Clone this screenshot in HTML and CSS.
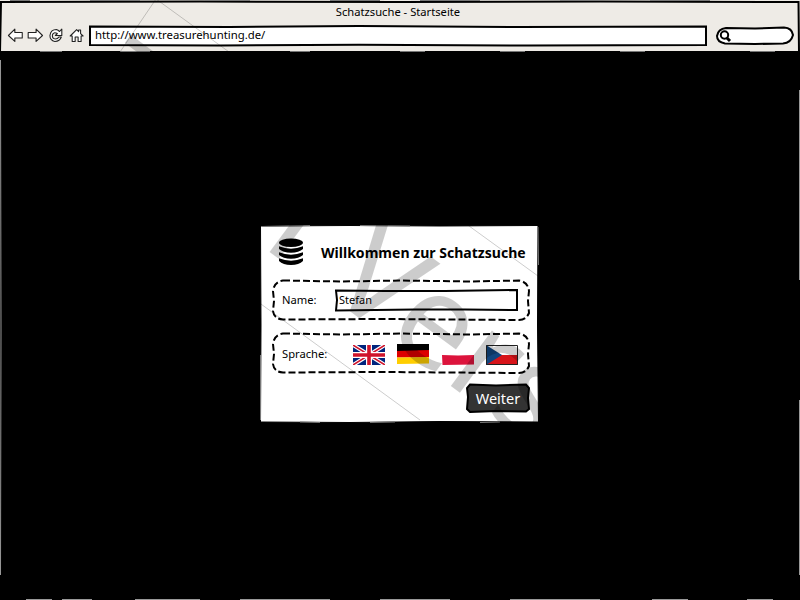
FILE: index.html
```
<!DOCTYPE html>
<html lang="de">
<head>
<meta charset="utf-8">
<title>Schatzsuche - Startseite</title>
<link rel="stylesheet" href="styles.css">
</head>
<body>
<div class="browser">
  <svg class="frame" viewBox="0 0 800 600">
    <path class="edge" d="M0 52L1 2L200 1.500L400 2L600 1.500L798.500 2L799 52"/>
    <path class="gray" d="M10 .5H30M90 .5H140M205 .5H250M330 .5H380M420 .5H480M560 .5H600M650 .5H710"/>
    <path class="gray" d="M40 51.500H62M120 51.500H150M290 51.500H310M400 51.500H425M500 51.500H525M620 51.500H645M750 51.500H775"/>
    <path class="light" d="M.5 60L1 330L.5 575M799.500 90V280M799.500 400V575M26 599.500H52M62 599.500H92M135 599.500H200M240 599.500H330M380 599.500H450M510 599.500H600M652 599.500H688M747 599.500H773"/>
  </svg>
  <header class="chrome">
    <div class="title">Schatzsuche - Startseite</div>
    <div class="toolbar">
      <svg class="nav" viewBox="0 0 90 24">
        <g class="icon">
          <path d="M8.500 11.500L15 5V8.500H22.500V14H15V17.500Z"/>
          <path d="M43 11.500L36.500 5V8.500H28.500V14H36.500V17.500Z"/>
          <path d="M60 7.500L62.500 5V11.500H56L58 9.500Q54 7.500 53 11Q52.500 14.500 56 15Q58.500 15 59.500 13H62Q60.500 17.500 55.500 17.500Q50.500 16.500 50.500 11.500Q51.500 5.500 57 5.500Q59 6 60 7.500Z"/>
          <path d="M71 12L77.500 5.500L79.500 7.500V6H81.500V9.500L84 12H82V17.500H79V13H76V17.500H73V12Z"/>
        </g>
      </svg>
      <div class="url"><svg class="sketch" viewBox="0 0 618 22"><path d="M1 1.500L140 2L270 1L430 2L617 1.500L617 20L440 20.500L270 19.800L130 20.500L1 20Z"/></svg><span>http://www.treasurehunting.de/</span></div>
      <svg class="search" viewBox="0 0 80 20"><path class="pill" d="M11 2L40 2.500L69 1.500Q77 2 78 9Q76 17 68 17.500L40 18L10 17.500Q2 16 2 10Q3 3 11 2Z"/><circle cx="9.500" cy="9" r="3.700"/><path class="handle" d="M12 12L15 15"/></svg>
    </div>
  </header>
  <main class="page">
    <section class="dialog">
      <svg class="dialog-edge" viewBox="0 0 280 200"><path d="M.5 1L90 .5L180 1L278 .5L277.500 100L278.500 197L180 196.500L90 197.500L.5 197L1 100Z"/><path class="scratch" d="M2 1.500L50 .5M100 .5L150 1M278 2L278.500 40M.5 195L.5 130M40 197L60 197.500M110 197.500L135 197M220 197.500L240 197"/></svg>
      <div class="heading">
        <svg class="db" viewBox="0 0 26 28"><ellipse cx="13" cy="4.800" rx="12" ry="4.200"/><path d="M1 8.300Q13 13 25 8.300V11Q21 14.700 13 14.700Q5 14.700 1 11ZM1 14.300Q13 19 25 14.300V17Q21 20.700 13 20.700Q5 20.700 1 17ZM1 20.300Q13 25 25 20.300V23Q21 27 13 27Q5 27 1 23Z"/></svg>
        <h1>Willkommen zur Schatzsuche</h1>
      </div>
      <div class="group">
        <svg class="dashed" viewBox="0 0 260 44"><path d="M12 1.500L70 2.500L130 1.500L200 2.500L248 1.500Q257 3 258 12L257 22L258 34Q255 41 248 41L180 40.500L110 40L12 40.500Q3 40 2 32L3 22L2 12Q3 3 12 1.500Z"/></svg>
        <label>Name:</label>
        <div class="field"><svg class="sketch" viewBox="0 0 184 24"><path d="M1 2.500L50 3L110 3L182 2L182 22L130 21.500L80 21.500L1 22.500L2 12Z"/></svg><span>Stefan</span></div>
      </div>
      <div class="group">
        <svg class="dashed" viewBox="0 0 260 44"><path d="M12 1.500L70 2.500L130 1.500L200 2.500L248 1.500Q257 3 258 12L257 22L258 34Q255 41 248 41L180 40.500L110 40L12 40.500Q3 40 2 32L3 22L2 12Q3 3 12 1.500Z"/></svg>
        <label class="language">Sprache:</label>
        <div class="flags">
          <svg viewBox="0 0 32 20"><path fill="#00247d" d="M0 0H32V20H0Z"/><path stroke="#fff" stroke-width="4" d="M0 0L32 20M32 0L0 20"/><path stroke="#cf142b" stroke-width="1.500" d="M0 0L32 20M32 0L0 20"/><path stroke="#fff" stroke-width="6" d="M16 0V20M0 10H32"/><path stroke="#cf142b" stroke-width="3.600" d="M16 0V20M0 10H32"/></svg>
          <svg class="de" viewBox="0 0 32 20"><path d="M0 0H32V7H0Z"/><path fill="#d00" d="M0 7L32 6V13.500H0Z"/><path fill="#ffce00" d="M0 13.500L32 13V19.500L0 20Z"/></svg>
          <svg viewBox="0 0 32 20"><path fill="#fff" d="M0 0H32V10H0Z"/><path fill="#dc143c" d="M0 10L16 10.500L32 10V19.500L.5 20Z"/></svg>
          <svg viewBox="0 0 32 20"><path fill="#fff" d="M0 0H32V20H0Z"/><path fill="#d7141a" d="M0 10H32V20H0Z"/><path fill="#11457e" d="M0 0L16 10L0 20Z"/><path fill="none" stroke="#222" d="M.5.5H31.500V19.500H.5Z"/></svg>
        </div>
      </div>
      <div class="actions"><button><svg class="sketch" viewBox="0 0 64 30"><path d="M4 1.500L30 2.500L60 1.500L63 5L62 15L63 26L60 28.500L30 28L4 29L1 26L2 14L1 5Z"/></svg><span>Weiter</span></button></div>
    </section>
  </main>
  <svg class="watermark" viewBox="0 0 800 600"><path d="M120 52L156 -1L538 276M228 280L420 420"/><text transform="translate(75 108) rotate(36.500)"><tspan class="first">Trial</tspan> <tspan x="309">Version</tspan></text></svg>
</div>
</body>
</html>
```
FILE: styles.css
```
* { box-sizing: border-box; }
body { margin: 0; background: #000; color: #000; font: 12px/16px "Noto Sans", "Open Sans", sans-serif; }
svg { display: block; }
.browser { position: relative; width: 800px; height: 600px; overflow: hidden; display: flex; flex-direction: column; }
.frame, .watermark { position: absolute; inset: 0; width: 800px; height: 600px; fill: none; pointer-events: none; }
.edge { stroke: #000; stroke-width: 2; }
.gray { stroke: #777; stroke-width: 1; }
.light { stroke: #999; stroke-width: 1; }
.chrome { height: 51px; background: #eeebe6; padding-top: 4px; }
.title { height: 20px; text-align: center; padding-right: 4px; font-size: 11.200px; line-height: 16px; }
.toolbar { display: flex; align-items: center; height: 24px; }
.nav { width: 89px; height: 24px; }
.icon { fill: #fff; stroke: #222; stroke-width: 1.100; stroke-linejoin: round; }
.url { position: relative; width: 618px; height: 22px; padding: 1px 6px; line-height: 18px; font-size: 11.350px; }
.sketch { position: absolute; inset: 0; width: 100%; height: 100%; fill: #fff; stroke: #000; stroke-width: 2; }
.url span, .field span, button span { position: relative; }
.search { width: 80px; height: 20px; margin-left: 8px; fill: none; stroke: #000; stroke-width: 2; }
.pill { fill: #fff; }
.handle { stroke-width: 3; }
.page { flex: 1; display: flex; justify-content: center; padding-top: 174px; }
.dialog { position: relative; width: 280px; height: 200px; padding: 10px 9px 0 11px; }
.dialog-edge { position: absolute; inset: 0; width: 280px; height: 200px; fill: #fff; stroke: #000; stroke-width: 1; }
.dialog-edge .scratch { stroke: #777; fill: none; }
.heading { position: relative; display: flex; align-items: center; height: 35px; }
.db { width: 26px; height: 28px; margin: 0 17px 2px 7px; }
h1 { margin: 0; font-size: 14.050px; line-height: 20px; white-space: nowrap; }
.group { position: relative; display: flex; align-items: center; height: 44px; margin-top: 9px; padding: 0 12px 2px 11px; }
.dashed { position: absolute; inset: 0; width: 260px; height: 44px; fill: none; stroke: #000; stroke-width: 2; stroke-dasharray: 7 3; }
label { position: relative; width: 53px; font-size: 11.200px; }
.language { padding-top: 2px; }
.field { position: relative; width: 184px; height: 24px; padding: 4px 4px; font-size: 11px; }
.flags { display: flex; gap: 12.300px; padding-left: 18px; padding-top: 3px; position: relative; }
.flags svg { width: 32px; height: 20px; }
.flags .de { margin-top: -1px; }
.actions { display: flex; justify-content: flex-end; margin-top: 7px; padding-right: 1px; }
button { position: relative; width: 64px; height: 30px; border: 0; padding: 0; background: none; color: #fff; font: 14.500px/28px "Noto Sans", sans-serif; }
button .sketch { fill: #333; }
.watermark path { stroke: #000; stroke-opacity: .2; }
.watermark text { fill: #000; fill-opacity: .2; font: 129px "Noto Sans", sans-serif; }
.first { letter-spacing: 1.700px; }
```
